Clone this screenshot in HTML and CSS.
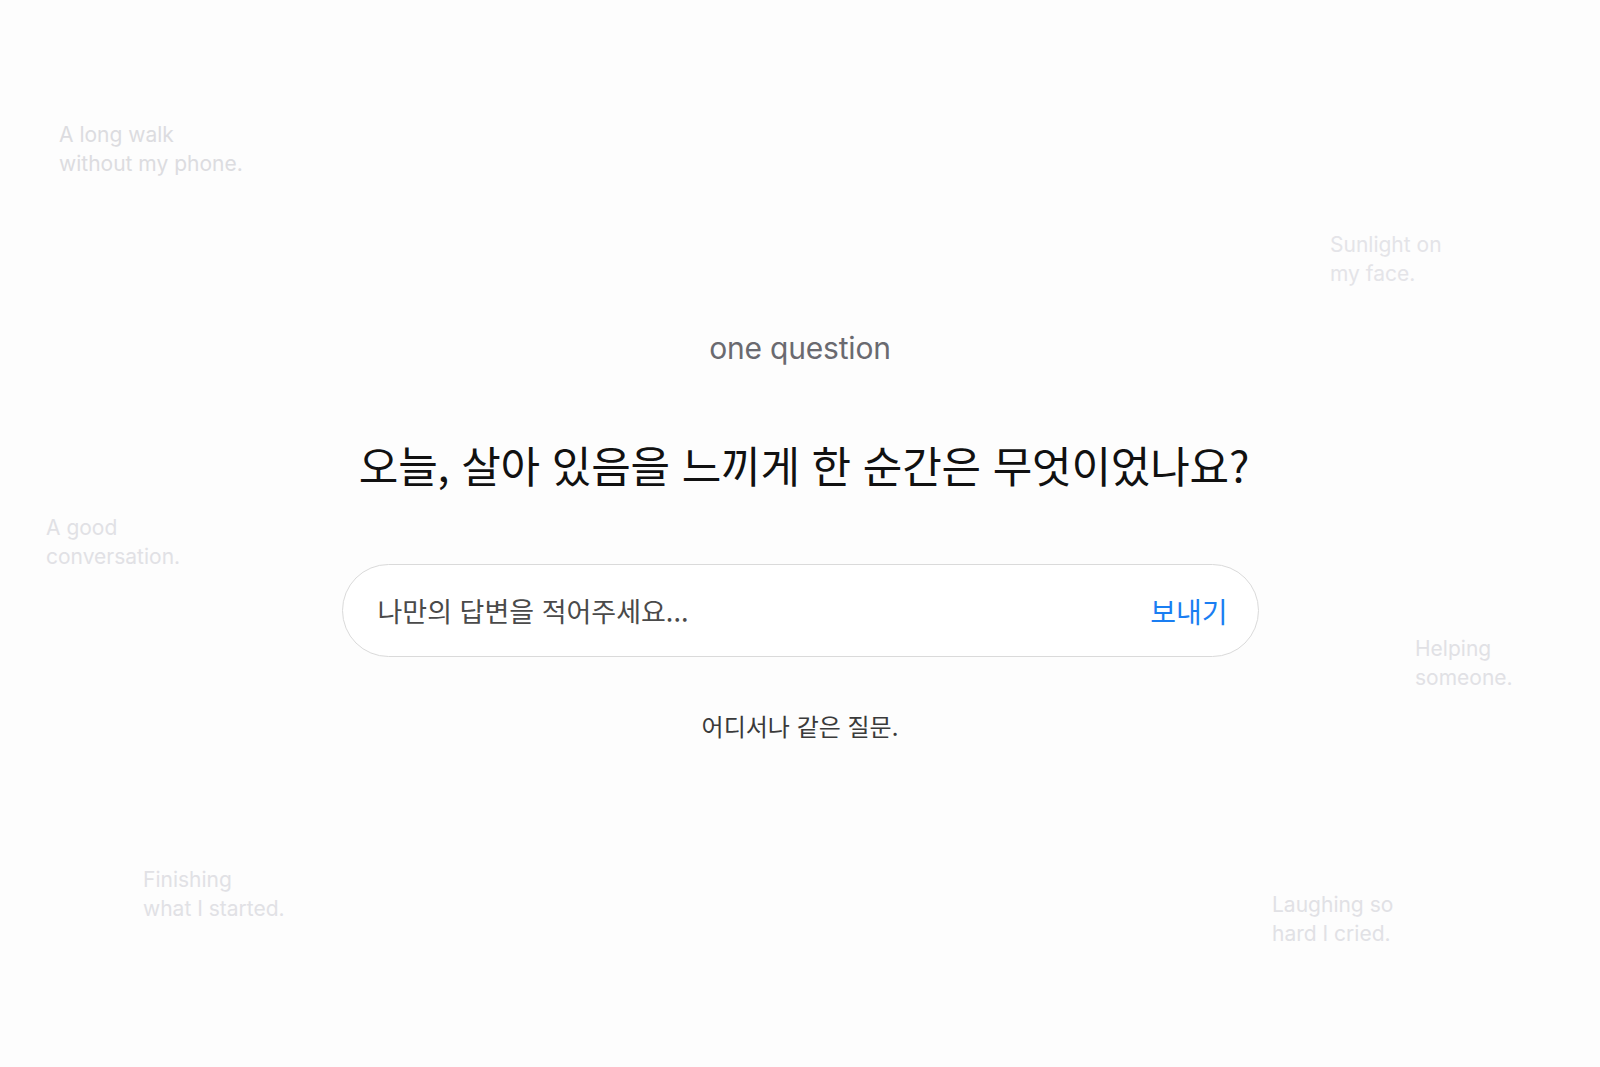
FILE: index.html
```html
<!DOCTYPE html>
<html lang="ko">
<head>
<meta charset="utf-8">
<title>one question</title>
<link rel="stylesheet" href="styles.css">
</head>
<body>
<div class="page">
  <div class="ghosts">
    <p class="ghost g1">A long walk<br>without my phone.</p>
    <p class="ghost g2">Sunlight on<br>my face.</p>
    <p class="ghost g3">A good<br>conversation.</p>
    <p class="ghost g4">Helping<br>someone.</p>
    <p class="ghost g5">Finishing<br>what I started.</p>
    <p class="ghost g6">Laughing so<br>hard I cried.</p>
  </div>
  <main class="main">
    <div class="brand">one question</div>
    <h1 class="question">오늘, 살아 있음을 느끼게 한 순간은 무엇이었나요?</h1>
    <form class="answer">
      <input class="answer-input" type="text" placeholder="나만의 답변을 적어주세요...">
      <button class="send" type="button">보내기</button>
    </form>
    <p class="footnote">어디서나 같은 질문.</p>
  </main>
</div>
</body>
</html>
```
FILE: styles.css
```css
* { box-sizing: border-box; }
html, body {
  margin: 0;
  padding: 0;
  background: #fdfdfd;
}
body {
  font-family: Inter, "Noto Sans CJK KR", sans-serif;
  color: #111;
  width: 1600px;
  height: 1067px;
  overflow: hidden;
}
.page {
  position: relative;
  width: 100%;
  height: 100%;
}
.ghost {
  position: absolute;
  margin: 0;
  font-family: Inter, sans-serif;
  font-size: 21px;
  line-height: 29px;
  color: #e1e1e5;
  letter-spacing: 0px;
  white-space: nowrap;
}
.g1 { left: 59px; top: 120px; color: #dcdce0; }
.g2 { left: 1330px; top: 230px; color: #e4e4e8; }
.g3 { left: 46px; top: 513px; }
.g4 { left: 1415px; top: 634px; }
.g5 { left: 143px; top: 865px; }
.g6 { left: 1272px; top: 890px; }

.main {
  position: relative;
  display: flex;
  flex-direction: column;
  align-items: center;
  padding-top: 331px;
}
.brand {
  font-family: Inter, sans-serif;
  font-size: 30px;
  line-height: 34px;
  color: #6a6a70;
  letter-spacing: -0.2px;
}
.question {
  margin: 73px 0 0;
  font-family: "Noto Sans CJK KR", sans-serif;
  font-weight: 400;
  font-size: 43px;
  line-height: 52px;
  color: #111;
  letter-spacing: -0.2px;
  padding-left: 8px;
}
.answer {
  margin: 74px 0 0;
  width: 917px;
  height: 93px;
  border: 1.5px solid #dadada;
  border-radius: 47px;
  background: #fff;
  display: flex;
  align-items: center;
  padding: 0 30px 0 35px;
}
.answer-input {
  flex: 1;
  border: none;
  outline: none;
  background: transparent;
  font-family: "Noto Sans CJK KR", sans-serif;
  font-size: 27px;
  color: #333;
  padding: 0;
}
.answer-input::placeholder {
  color: #4a4a4a;
}
.send {
  border: none;
  background: none;
  padding: 0;
  font-family: "Noto Sans CJK KR", sans-serif;
  font-size: 28px;
  color: #1a7ef2;
  cursor: pointer;
}
.footnote {
  margin: 54px 0 0;
  font-family: "Noto Sans CJK KR", sans-serif;
  font-size: 24px;
  line-height: 30px;
  color: #3a3a3a;
}
```
